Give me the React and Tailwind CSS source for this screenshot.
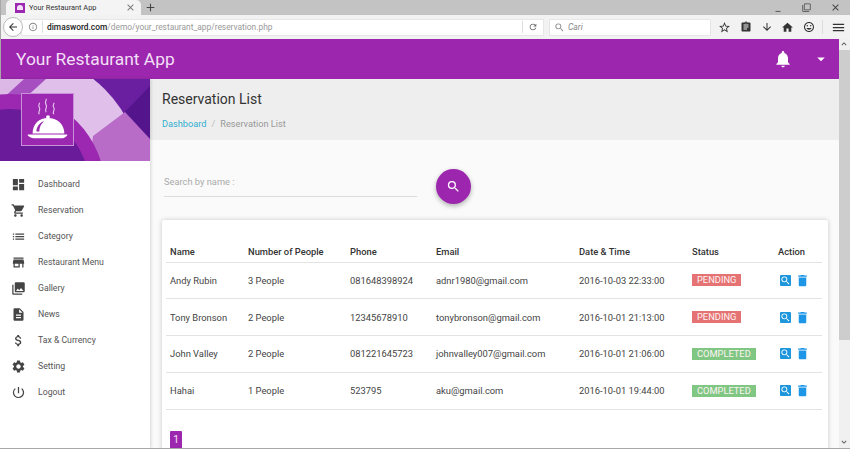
import React from "react";
import { MdDashboard, MdShoppingCart, MdList, MdStore, MdPhotoLibrary, MdDescription, MdAttachMoney, MdSettings, MdPowerSettingsNew, MdNotifications, MdArrowDropDown, MdSearch, MdDelete, MdArrowBack, MdHome, MdArrowDownward, MdClose, MdAdd, MdMenu, MdRefresh, MdInfoOutline, MdStarBorder, MdKeyboardArrowUp, MdKeyboardArrowDown, MdMinimize, MdFilterNone, MdAssignment, MdTagFaces } from "react-icons/md";

const nav = [
  [MdDashboard, "Dashboard"], [MdShoppingCart, "Reservation"], [MdList, "Category"], [MdStore, "Restaurant Menu"],
  [MdPhotoLibrary, "Gallery"], [MdDescription, "News"], [MdAttachMoney, "Tax & Currency"], [MdSettings, "Setting"], [MdPowerSettingsNew, "Logout"],
];
const rows = [
  ["Andy Rubin", "3 People", "081648398924", "adnr1980@gmail.com", "2016-10-03 22:33:00", "PENDING"],
  ["Tony Bronson", "2 People", "12345678910", "tonybronson@gmail.com", "2016-10-01 21:13:00", "PENDING"],
  ["John Valley", "2 People", "081221645723", "johnvalley007@gmail.com", "2016-10-01 21:06:00", "COMPLETED"],
  ["Hahai", "1 People", "523795", "aku@gmail.com", "2016-10-01 19:44:00", "COMPLETED"],
];

function Cloche() {
  return (
    <svg width="53" height="53" viewBox="0 0 53 53" fill="none">
      <path d="M18 21c-2-3 2-4 0-7s1-3 0-5M25 19c-2-4 2-5 0-8s1-4 0-6M33 21c-2-3 2-4 0-7s1-3 0-5" stroke="#e4c8ec" strokeWidth="1.2" />
      <circle cx="27" cy="24" r="2" fill="#fff" />
      <path d="M11 41c0-10 7-16 16-16s17 6 17 16z" fill="#fff" />
      <path d="M15 39c0-5 3-9 8-11-3 3-5 6-5 11z" fill="#9c27b0" />
      <path d="M6 42h41v1c-2 2-4 3-6 3H14c-3 0-6-1-8-3z" fill="#fff" />
    </svg>
  );
}

function Banner() {
  return (
    <div className="relative h-[82px] w-[150px] overflow-hidden">
      <svg className="absolute inset-0" width="150" height="82" viewBox="0 0 150 82">
        <rect width="150" height="82" fill="#6a1fa0" />
        <path d="M150 7V82H130L118 40z" fill="#54158c" />
        <circle cx="15" cy="100" r="127" fill="#e0c0ea" />
        <path d="M93 57L125 33L150 60V82H90z" fill="#b86cc8" />
        <path d="M0 0H24L0 22z" fill="#dcb8e6" />
        <path d="M24 0H46L24 20H0V22z" fill="#a64fc0" />
        <circle cx="10" cy="110" r="95" fill="#9c27b0" />
        <circle cx="10" cy="110" r="80" fill="#6a1b9a" />
      </svg>
      <div className="absolute left-[21px] top-[14px] flex h-[53px] w-[53px] items-center justify-center border border-[#c98fd8] bg-[#9c27b0]">
        <Cloche />
      </div>
    </div>
  );
}

function Chrome() {
  return (
    <>
      <div className="relative flex h-[15px] items-end bg-[#c3c3c3]">
        <div className="ml-[6px] flex h-[15px] w-[135px] items-center rounded-t-[5px] bg-[#f4f4f4] pl-[9px]">
          <span className="flex h-[10px] w-[10px] items-center justify-center bg-[#9c27b0]"><span className="h-[5px] w-[6px] rounded-t-full bg-[#f4dff8]" /></span>
          <span className="ml-[4px] flex-1 text-[7.400px] leading-none text-[#333]">Your Restaurant App</span>
          <MdClose className="mr-[5px] text-[11px] text-[#777]" />
        </div>
        <MdAdd className="mb-[1px] ml-[3px] text-[13px] text-[#444]" />
        <div className="ml-auto flex h-[15px] items-center gap-[19px] pr-[9px] text-[#444]">
          <MdMinimize className="text-[10px]" />
          <MdFilterNone className="text-[9px]" />
          <MdClose className="text-[11px]" />
        </div>
      </div>
      <div className="flex h-[24px] items-center bg-[#f2f2f2] pl-[3px]">
        <div className="z-10 flex h-[20px] w-[20px] items-center justify-center rounded-full border border-[#bbb] bg-white">
          <MdArrowBack className="text-[12px] text-[#333]" />
        </div>
        <div className="-ml-[2px] flex h-[17px] w-[523px] items-center border border-[#e6e6e6] bg-white pl-[6px]">
          <MdInfoOutline className="text-[10px] text-[#888]" />
          <span className="mx-[4px] h-[12px] w-px bg-[#ddd]" />
          <span className="text-[8.400px] font-medium leading-none text-[#999]"><span className="text-[#222]">dimasword.com</span><span className="font-normal">/demo/your_restaurant_app/reservation.php</span></span>
          <span className="ml-auto h-[12px] w-px bg-[#ddd]" />
          <MdRefresh className="mx-[5px] text-[10px] text-[#666]" />
        </div>
        <div className="ml-[5px] flex h-[17px] w-[162px] items-center border border-[#e6e6e6] bg-white pl-[4px]">
          <MdSearch className="text-[11px] text-[#888]" />
          <span className="ml-[3px] text-[8.500px] italic leading-none text-[#888]">Cari</span>
        </div>
        <div className="ml-[3px] flex items-center text-[#333]">
          <span className="flex w-[21px] justify-center"><MdStarBorder className="text-[13px]" /></span>
          <span className="flex w-[21px] justify-center"><MdAssignment className="text-[12px]" /></span>
          <span className="flex w-[21px] justify-center"><MdArrowDownward className="text-[12px]" /></span>
          <span className="flex w-[21px] justify-center"><MdHome className="text-[13px]" /></span>
          <span className="flex w-[21px] justify-center"><MdTagFaces className="text-[12px]" /></span>
          <span className="ml-[3px] h-[14px] w-px bg-[#ddd]" />
          <span className="ml-[4px] flex w-[22px] justify-center"><MdMenu className="text-[15px]" /></span>
        </div>
      </div>
    </>
  );
}

export default function App() {
  return (
    <div className="relative flex h-[449px] w-[850px] flex-col overflow-hidden border-b border-[#a8a8a8] bg-white font-['Roboto',sans-serif]">
      <Chrome />
      <div className="flex min-h-0 flex-1">
        <div className="flex min-w-0 flex-1 flex-col">
          <header className="flex h-[40px] shrink-0 items-center bg-[#9c27ae] pl-[16px] pr-[9px] text-white">
            <h1 className="pt-[2px] text-[17.400px] font-normal leading-none text-[#f3dff6]">Your Restaurant App</h1>
            <MdNotifications className="ml-auto text-[20px]" />
            <MdArrowDropDown className="ml-[19px] text-[18px]" />
          </header>
          <div className="flex min-h-0 flex-1">
            <aside className="z-10 w-[150px] shrink-0 bg-white shadow-[1px_0_3px_rgba(0,0,0,0.15)]">
              <Banner />
              <nav className="pt-[10px]">
                {nav.map(([Icon, label]) => (
                  <div key={label} className="flex h-[26.100px] items-center pl-[11px]">
                    <Icon className="w-[15px] text-[15px] text-[#444]" />
                    <span className="ml-[12px] text-[8.700px] text-[#555]">{label}</span>
                  </div>
                ))}
              </nav>
            </aside>
            <main className="min-w-0 flex-1 bg-[#fafafa]">
              <div className="h-[61px] bg-[#eeeeee] pl-[12px] pt-[12px]">
                <h2 className="text-[14px] font-normal leading-[17px] text-[#333]">Reservation List</h2>
                <div className="mt-[10px] text-[9.200px] leading-[12px]">
                  <span className="text-[#31aed0]">Dashboard</span>
                  <span className="mx-[5px] text-[#bbb]">/</span>
                  <span className="text-[#999]">Reservation List</span>
                </div>
              </div>
              <div className="flex h-[80px] items-start pl-[14px]">
                <div className="mt-[29px] h-[28px] w-[253px] border-b border-[#dcdcdc] text-[9.300px] leading-[25px] text-[#aaa]">Search by name :</div>
                <button className="ml-[19px] mt-[29px] flex h-[35px] w-[35px] items-center justify-center rounded-full bg-[#9c27ae] text-white shadow-[0_2px_5px_rgba(0,0,0,0.3)]">
                  <MdSearch className="text-[15px]" />
                </button>
              </div>
              <div className="ml-[12px] h-[240px] w-[666px] rounded-[2px] bg-white px-[4px] pt-[21px] shadow-[0_0_5px_rgba(0,0,0,0.2)]">
                <table className="w-[656px] table-fixed border-collapse text-left text-[9.350px] text-[#444]">
                  <colgroup>
                    <col className="w-[78px]" /><col className="w-[102px]" /><col className="w-[86px]" /><col className="w-[143px]" /><col className="w-[113px]" /><col className="w-[86px]" /><col className="w-[48px]" />
                  </colgroup>
                  <thead>
                    <tr className="h-[21px] border-b border-[#e3e3e3] text-[#333]">
                      {["Name", "Number of People", "Phone", "Email", "Date & Time", "Status", "Action"].map((h) => (
                        <th key={h} className="pl-[4px] pt-[1px] font-medium">{h}</th>
                      ))}
                    </tr>
                  </thead>
                  <tbody>
                    {rows.map((r) => (
                      <tr key={r[0]} className="h-[36.750px] border-b border-[#e3e3e3]">
                        {r.slice(0, 5).map((c, i) => <td key={i} className="pl-[4px] pt-[1px]">{c}</td>)}
                        <td className="pl-[4px]">
                          <span className={`inline-block h-[12px] px-[5px] text-[9.300px] leading-[12px] text-[#fdf3f3] ${r[5] === "PENDING" ? "bg-[#e57373]" : "bg-[#81c784]"}`}>{r[5]}</span>
                        </td>
                        <td className="pl-[6px]">
                          <div className="flex items-center gap-[4px]">
                            <span className="flex h-[11px] w-[11px] items-center justify-center rounded-[1px] bg-[#1e96dc]"><MdSearch className="text-[11px] text-white" /></span>
                            <MdDelete className="text-[15px] text-[#1e96e8]" />
                          </div>
                        </td>
                      </tr>
                    ))}
                  </tbody>
                </table>
                <div className="ml-[4px] mt-[21px] flex h-[20px] w-[12px] items-center justify-center rounded-t-[1px] bg-[#9c27ae] text-[11px] text-[#f3dff6]">1</div>
              </div>
            </main>
          </div>
        </div>
        <div className="flex w-[11px] shrink-0 flex-col justify-between bg-[#f0f0f0]">
          <div>
            <MdKeyboardArrowUp className="text-[10px] text-[#555]" />
            <div className="mt-[1px] h-[290px] bg-[#cdcdcd]" />
          </div>
          <MdKeyboardArrowDown className="mb-[1px] text-[10px] text-[#555]" />
        </div>
      </div>
      <div className="absolute bottom-0 left-0 top-0 w-px bg-[#a8a8a8]" />
    </div>
  );
}
